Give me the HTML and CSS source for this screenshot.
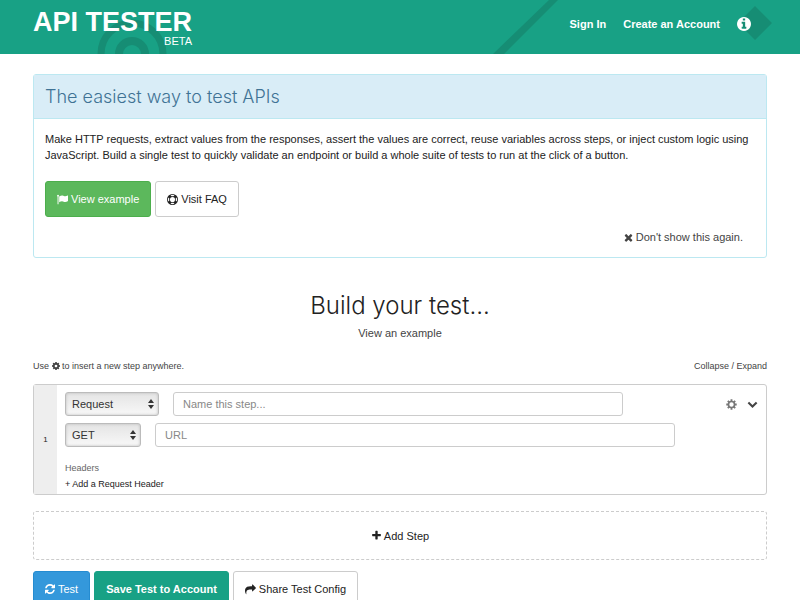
FILE: index.html
```html
<!DOCTYPE html>
<html lang="en">
<head>
  <meta charset="UTF-8">
  <meta name="viewport" content="width=device-width, initial-scale=1.0">
  <title>API Tester</title>
  <link rel="stylesheet" href="styles.css">
</head>
<body>
  <!-- icons -->
  <svg class="sprite" aria-hidden="true">
    <symbol id="i-cog" viewBox="128 128 1536 1536"><path d="M1152 896q0-106-75-181t-181-75-181 75-75 181 75 181 181 75 181-75 75-181zm512-109v222q0 12-8 23t-20 13l-185 28q-19 54-39 91 35 50 107 138 10 12 10 25t-9 23q-27 37-99 108t-94 71q-12 0-26-9l-138-108q-44 23-91 38-16 136-29 186-7 28-36 28h-222q-14 0-24.500-8.500t-11.500-21.500l-28-184q-49-16-90-37l-141 107q-10 9-25 9-14 0-25-11-126-114-165-168-7-10-7-23 0-12 8-23 15-21 51-66.500t54-70.500q-27-50-41-99l-183-27q-13-2-21-12.500t-8-23.500v-222q0-12 8-23t19-13l186-28q14-46 39-92-40-57-107-138-10-12-10-24 0-10 9-23 26-36 98.500-107.500t94.500-71.500q13 0 26 10l138 107q44-23 91-38 16-136 29-186 7-28 36-28h222q14 0 24.500 8.500t11.500 21.500l28 184q49 16 90 37l142-107q9-9 24-9 13 0 25 10 129 119 165 170 7 8 7 22 0 12-8 23-15 21-51 66.500t-54 70.500q26 50 41 98l183 28q13 2 21 12.500t8 23.500z"/></symbol>
    <symbol id="i-plus" viewBox="0 0 1792 1792"><path d="M1600 736v192q0 40-28 68t-68 28h-416v416q0 40-28 68t-68 28h-192q-40 0-68-28t-28-68v-416h-416q-40 0-68-28t-28-68v-192q0-40 28-68t68-28h416v-416q0-40 28-68t68-28h192q40 0 68 28t28 68v416h416q40 0 68 28t28 68z"/></symbol>
    <symbol id="i-times" viewBox="190 190 1412 1412"><path d="M1490 1322q0 40-28 68l-136 136q-28 28-68 28t-68-28l-294-294-294 294q-28 28-68 28t-68-28l-136-136q-28-28-28-68t28-68l294-294-294-294q-28-28-28-68t28-68l136-136q28-28 68-28t68 28l294 294 294-294q28-28 68-28t68 28l136 136q28 28 28 68t-28 68l-294 294 294 294q28 28 28 68z"/></symbol>
    <symbol id="i-info" viewBox="128 128 1536 1536"><path d="M1152 1376v-160q0-14-9-23t-23-9h-96v-512q0-14-9-23t-23-9h-320q-14 0-23 9t-9 23v160q0 14 9 23t23 9h96v320h-96q-14 0-23 9t-9 23v160q0 14 9 23t23 9h448q14 0 23-9t9-23zm-128-896v-160q0-14-9-23t-23-9h-192q-14 0-23 9t-9 23v160q0 14 9 23t23 9h192q14 0 23-9t9-23zm640 416q0 209-103 385.500t-279.500 279.500-385.500 103-385.500-103-279.500-279.500-103-385.500 103-385.500 279.500-279.500 385.500-103 385.500 103 279.500 279.500 103 385.500z"/></symbol>
    <symbol id="i-refresh" viewBox="128 128 1536 1536"><path d="M1639 1056q0 5-1 7-64 268-268 434.500t-478 166.500q-146 0-282.500-55t-243.500-157l-129 129q-19 19-45 19t-45-19-19-45v-448q0-26 19-45t45-19h448q26 0 45 19t19 45-19 45l-137 137q71 66 161 102t187 36q134 0 250-65t186-179q11-17 53-117 8-23 30-23h192q13 0 22.500 9.500t9.500 22.500zm25-800v448q0 26-19 45t-45 19h-448q-26 0-45-19t-19-45 19-45l138-138q-148-137-349-137-134 0-250 65t-186 179q-11 17-53 117-8 23-30 23h-199q-13 0-22.500-9.500t-9.500-22.500v-7q65-268 270-434.500t480-166.500q146 0 284 55.500t245 156.500l130-129q19-19 45-19t45 19 19 45z"/></symbol>
    <symbol id="i-share" viewBox="0 0 1792 1792"><path d="M1792 640q0 26-19 45l-512 512q-19 19-45 19t-45-19-19-45v-256h-224q-98 0-175.500 6t-154 21.500-133 42.500-105.500 69.500-80 101-48.500 138.500-17.500 181q0 55 5 123 0 6 2.500 23.500t2.500 26.500q0 15-8.500 25t-23.500 10q-16 0-28-17-7-9-13-22t-13.500-30-10.500-24q-127-285-127-451 0-199 53-333 162-403 875-403h224v-256q0-26 19-45t45-19 45 19l512 512q19 19 19 45z"/></symbol>
    <symbol id="i-flag" viewBox="0 0 16 16"><path d="M1.500 1a1.400 1.400 0 0 1 .7 2.600V15H.8V3.600A1.400 1.400 0 0 1 1.500 1zM3.200 3.600C5 2.600 6.500 2 8 2.200c1.700.2 2.600 1.100 4 1.100 1.200 0 2.300-.6 3.300-1.200.4-.2.700 0 .7.400v7.200c0 .4-.2.600-.5.800-1.100.6-2.200 1.100-3.500 1.100-1.700 0-2.700-1.200-4.700-1.200-1.400 0-2.700.7-4.100 1.500z"/></symbol>
    <symbol id="i-ring" viewBox="0 0 16 16"><path fill-rule="evenodd" d="M8 0a8 8 0 1 1 0 16A8 8 0 0 1 8 0zm0 4.300a3.700 3.700 0 1 0 0 7.400 3.700 3.700 0 0 0 0-7.400zM5.100 1.900l1.400 1.500a5 5 0 0 1 3 0l1.400-1.500a7 7 0 0 0-5.800 0zM5.100 14.100a7 7 0 0 0 5.800 0l-1.400-1.500a5 5 0 0 1-3 0zM1.900 5.100a7 7 0 0 0 0 5.800l1.500-1.400a5 5 0 0 1 0-3zM14.100 5.100l-1.500 1.400a5 5 0 0 1 0 3l1.500 1.400a7 7 0 0 0 0-5.800z"/></symbol>
    <symbol id="i-chevron" viewBox="0 0 16 16"><path d="M2 5l6 6 6-6" fill="none" stroke="currentColor" stroke-width="3"/></symbol>
    <symbol id="i-gear" viewBox="0 0 20 20"><circle cx="10" cy="10" r="5.500" fill="none" stroke="currentColor" stroke-width="3"/><path d="M10 .5v3.500M10 16v3.500M.5 10h3.500M16 10h3.500M3.300 3.300L6 6M14 14l2.700 2.700M3.300 16.700L6 14M14 6l2.700-2.700" stroke="currentColor" stroke-width="3.400"/></symbol>
    <symbol id="i-updown" viewBox="0 0 6 10"><path d="M3 0l3 4H0zM3 10L0 6h6z"/></symbol>
  </svg>

  <header class="topbar">
    <svg class="art art-left" viewBox="0 0 200 54" aria-hidden="true">
      <circle cx="132" cy="54" r="31" fill="none" stroke="currentColor" stroke-width="7"/>
      <circle cx="132" cy="54" r="13" fill="none" stroke="currentColor" stroke-width="8"/>
    </svg>
    <svg class="art art-right" viewBox="0 0 330 54" aria-hidden="true">
      <path d="M79 0h9L34 54H23zM285 6l17 17-17 17-17-17z" fill="currentColor"/>
    </svg>
    <a class="brand" href="#">
      <span class="brand-name">API TESTER</span>
      <span class="brand-tag">BETA</span>
    </a>
    <nav class="topnav">
      <a href="#">Sign In</a>
      <a href="#">Create an Account</a>
      <a class="info" href="#" aria-label="About"><svg class="icon icon-lg"><use href="#i-info"/></svg></a>
    </nav>
  </header>

  <main class="container">
    <section class="panel">
      <h2 class="panel-title">The easiest way to test APIs</h2>
      <div class="panel-body">
        <p>Make HTTP requests, extract values from the responses, assert the values are correct, reuse variables across steps, or inject custom logic using JavaScript. Build a single test to quickly validate an endpoint or build a whole suite of tests to run at the click of a button.</p>
        <div class="btn-row">
          <button class="btn btn-success" type="button"><svg class="icon"><use href="#i-flag"/></svg>View example</button>
          <button class="btn" type="button"><svg class="icon"><use href="#i-ring"/></svg>Visit FAQ</button>
        </div>
        <a class="dismiss" href="#"><svg class="icon icon-sm"><use href="#i-times"/></svg>Don't show this again.</a>
      </div>
    </section>

    <div class="intro">
      <h1>Build your test...</h1>
      <a href="#">View an example</a>
    </div>

    <div class="hints">
      <span>Use <svg class="icon icon-xs"><use href="#i-cog"/></svg> to insert a new step anywhere.</span>
      <span><a href="#">Collapse</a> / <a href="#">Expand</a></span>
    </div>

    <section class="step">
      <div class="step-number">1</div>
      <div class="step-body">
        <div class="step-row">
          <span class="select select-type">
            <select aria-label="Step type"><option>Request</option><option>Condition</option></select>
            <svg class="arrows"><use href="#i-updown"/></svg>
          </span>
          <input class="field field-name" type="text" placeholder="Name this step..." aria-label="Step name">
          <div class="step-tools">
            <button type="button" aria-label="Step options"><svg class="icon"><use href="#i-gear"/></svg></button>
            <button type="button" aria-label="Collapse step"><svg class="icon dark"><use href="#i-chevron"/></svg></button>
          </div>
        </div>
        <div class="step-row">
          <span class="select select-method">
            <select aria-label="Method"><option>GET</option><option>POST</option><option>PUT</option><option>DELETE</option></select>
            <svg class="arrows"><use href="#i-updown"/></svg>
          </span>
          <input class="field field-url" type="text" placeholder="URL" aria-label="URL">
        </div>
        <div class="headers">
          <div class="headers-title">Headers</div>
          <a href="#">+ Add a Request Header</a>
        </div>
      </div>
    </section>

    <button class="add-step" type="button"><svg class="icon"><use href="#i-plus"/></svg>Add Step</button>

    <div class="btn-row">
      <button class="btn btn-primary" type="button"><svg class="icon icon-md"><use href="#i-refresh"/></svg>Test</button>
      <button class="btn btn-save" type="button">Save Test to Account</button>
      <button class="btn" type="button"><svg class="icon"><use href="#i-share"/></svg>Share Test Config</button>
    </div>
  </main>
</body>
</html>
```

FILE: styles.css
```css
:root {
  --green: #18a185;
  --green-dark: #168d74;
  --text: #222;
  --muted: #444;
  --border: #ccc;
}
* { box-sizing: border-box; }
body {
  margin: 0;
  font-family: "Liberation Sans", Arial, sans-serif;
  font-size: 11px;
  line-height: 16px;
  color: var(--text);
  background: #fff;
}
a {
  color: inherit;
  text-decoration: none;
}
button, input, select {
  font: inherit;
  color: inherit;
}
.sprite {
  position: absolute;
  width: 0;
  height: 0;
}
.icon {
  width: 11px;
  height: 11px;
  fill: currentColor;
  flex: none;
}
.icon-xs {
  width: 8px;
  height: 8px;
}
.icon-sm {
  width: 9px;
  height: 9px;
}
.icon-md {
  width: 10px;
  height: 10px;
}
.icon-lg {
  width: 14px;
  height: 14px;
}

/* top bar */
.topbar {
  position: relative;
  display: flex;
  justify-content: space-between;
  height: 54px;
  padding: 0 49px 0 33px;
  background: var(--green);
  color: #fff;
}
.art {
  position: absolute;
  top: 0;
  height: 54px;
  color: var(--green-dark);
}
.art-left {
  left: 0;
  width: 200px;
}
.art-right {
  right: 0;
  width: 330px;
}
.brand {
  position: relative;
  display: flex;
  flex-direction: column;
  padding-top: 9px;
}
.brand-name {
  font-size: 27px;
  line-height: 26px;
  font-weight: bold;
}
.brand-tag {
  line-height: 12px;
  text-align: right;
}
.topnav {
  position: relative;
  display: flex;
  align-items: center;
  gap: 17px;
  height: 48px;
  font-weight: bold;
}
.info { display: flex; }

.container { padding: 20px 33px; }

/* welcome panel */
.panel {
  border: 1px solid #bce8f1;
  border-radius: 3px;
}
.panel-title {
  margin: 0;
  padding: 10px 11px 9px;
  border-bottom: 1px solid #bce8f1;
  background: #d9edf7;
  color: #3f7395;
  font-family: Inter, "Liberation Sans", sans-serif;
  font-size: 18px;
  line-height: 24px;
  font-weight: 300;
}
.panel-body {
  display: flex;
  flex-direction: column;
  padding: 12px 11px;
}
.panel-body p { margin: 0 0 18px; }
.btn-row {
  display: flex;
  gap: 4px;
}
.btn {
  display: flex;
  align-items: center;
  gap: 3px;
  height: 36px;
  padding: 0 11px;
  border: 1px solid var(--border);
  border-radius: 3px;
  background: #fff;
  cursor: pointer;
}
.btn-success {
  background: #5cb85c;
  border-color: #4cae4c;
  color: #fff;
}
.btn-primary {
  background: #3498db;
  border-color: #258cd1;
  color: #fff;
}
.btn-save {
  background: var(--green);
  border-color: var(--green);
  color: #fff;
  font-weight: bold;
}
.dismiss {
  display: flex;
  align-items: center;
  align-self: flex-end;
  gap: 3px;
  margin-top: 12px;
  padding-right: 12px;
  color: var(--muted);
}

/* heading */
.intro {
  padding: 32px 0 17px;
  text-align: center;
  color: var(--muted);
}
.intro h1 {
  margin: 0 0 3px;
  color: var(--text);
  font-family: Inter, "Liberation Sans", sans-serif;
  font-size: 24px;
  line-height: 32px;
  font-weight: 300;
}
.hints {
  display: flex;
  justify-content: space-between;
  margin-bottom: 10px;
  font-size: 9px;
  color: var(--muted);
}
.hints .icon { vertical-align: -1px; }

/* step card */
.step {
  display: flex;
  border: 1px solid var(--border);
  border-radius: 3px;
}
.step-number {
  display: flex;
  align-items: center;
  justify-content: center;
  width: 23px;
  background: #eee;
  font-size: 8px;
}
.step-body {
  flex: 1;
  padding: 7px 8px 2px;
}
.step-row {
  display: flex;
  align-items: center;
  gap: 14px;
  margin-bottom: 7px;
}
.select {
  position: relative;
  flex: none;
}
.select select {
  appearance: none;
  width: 100%;
  height: 24px;
  padding: 0 6px;
  border: 1px solid #bbb;
  border-radius: 3px;
  background: linear-gradient(#e4e4e4, #f8f8f8);
  box-shadow: inset 0 0 3px #bbb;
  color: #333;
}
.select-type { width: 94px; }
.select-method { width: 76px; }
.arrows {
  position: absolute;
  right: 5px;
  top: 7px;
  width: 6px;
  height: 10px;
  fill: #333;
  pointer-events: none;
}
.field {
  height: 24px;
  padding: 0 9px;
  border: 1px solid var(--border);
  border-radius: 3px;
  background: #fff;
}
.field::placeholder { color: #888; }
.field-name { width: 65%; }
.field-url { width: 75%; }
.step-tools {
  display: flex;
  gap: 10px;
  margin-left: auto;
}
.step-tools button {
  display: flex;
  padding: 0;
  border: 0;
  background: none;
  color: #777;
  cursor: pointer;
}
.step-tools .dark { color: #444; }
.headers {
  padding-top: 6px;
  font-size: 9px;
}
.headers-title { color: #666; }

.add-step {
  display: flex;
  align-items: center;
  justify-content: center;
  gap: 2px;
  width: 100%;
  height: 49px;
  margin: 16px 0 11px;
  border: 1px dashed var(--border);
  border-radius: 3px;
  background: none;
  cursor: pointer;
}
```
